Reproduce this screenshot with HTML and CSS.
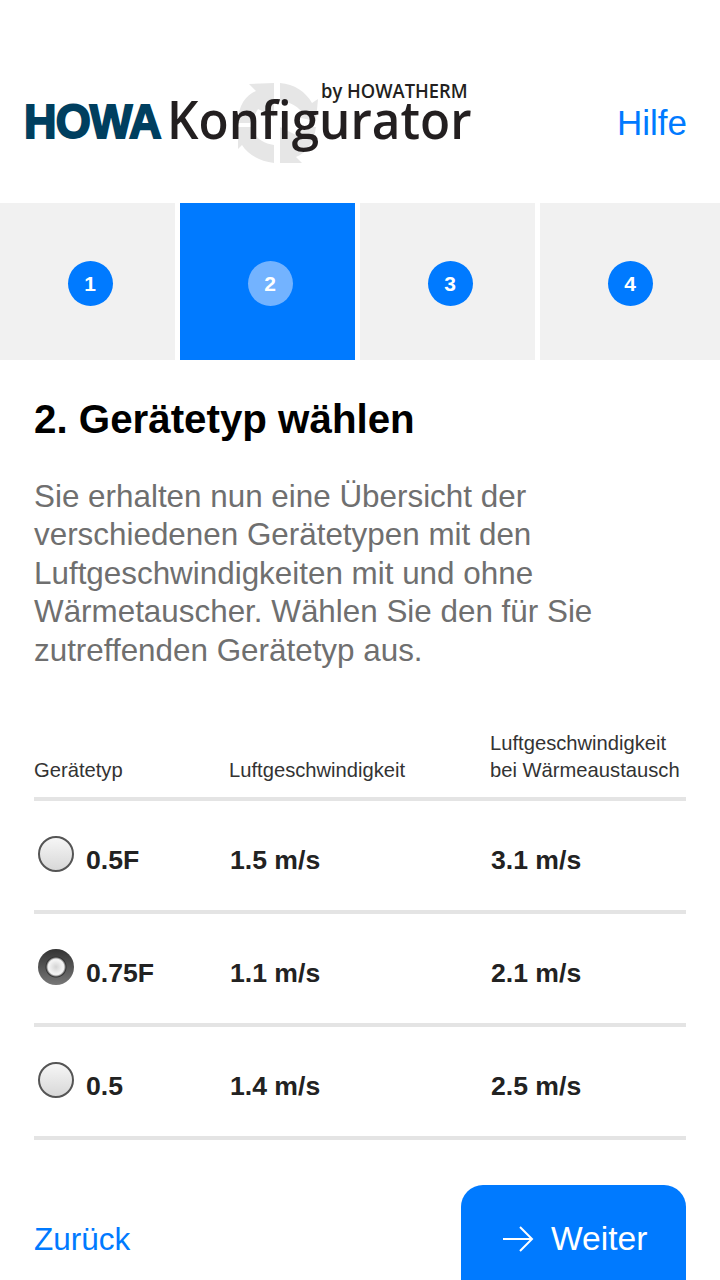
FILE: index.html
```html
<!DOCTYPE html>
<html lang="de">
<head>
	<meta charset="UTF-8">
	<title>HOWA Konfigurator</title>
	<link rel="stylesheet" href="styles.css">
</head>
<body>
	<div id="page">
		<div id="header">
			<div class="logo">
				<svg class="logo-arrows" width="84" height="84" viewBox="0 0 84 84">
					<path d="M38 2 V36 L22 28 L14 42 H2 C2 24 10 14 20 10 L13 3 Z" fill="#e6e6e6"/>
					<path d="M44 2 C58 3 70 11 76 22 L82 18 L80 40 L60 36 L66 31 C60 24 52 20 44 20 Z" fill="#e6e6e6"/>
					<path d="M2 46 H16 C18 56 26 62 38 64 V82 C24 80 12 74 6 64 L2 68 Z" fill="#e6e6e6"/>
					<path d="M44 46 L60 54 L68 46 H80 C78 62 70 72 60 76 L66 82 L44 82 Z" fill="#e6e6e6"/>
				</svg>
				<span class="logo-by">by HOWATHERM</span>
				<span class="logo-howa">HOWA</span>
				<span class="logo-name">Konfigurator</span>
			</div>
			<a class="help" href="#">Hilfe</a>
		</div>

		<div id="steps">
			<div class="step"><span class="num">1</span></div>
			<div class="step active"><span class="num">2</span></div>
			<div class="step"><span class="num">3</span></div>
			<div class="step last"><span class="num">4</span></div>
		</div>

		<div id="content">
			<h1>2. Gerätetyp wählen</h1>
			<p class="intro">Sie erhalten nun eine Übersicht der verschiedenen Gerätetypen mit den Luftgeschwindigkeiten mit und ohne Wärmetauscher. Wählen Sie den für Sie zutreffenden Gerätetyp aus.</p>

			<div class="row head">
				<div>Gerätetyp</div>
				<div>Luftgeschwindigkeit</div>
				<div>Luftgeschwindigkeit<br>bei Wärmeaustausch</div>
			</div>
			<div class="row item">
				<div class="type"><span class="radio"></span>0.5F</div>
				<div class="val">1.5 m/s</div>
				<div class="val">3.1 m/s</div>
			</div>
			<div class="row item">
				<div class="type"><span class="radio checked"></span>0.75F</div>
				<div class="val">1.1 m/s</div>
				<div class="val">2.1 m/s</div>
			</div>
			<div class="row item">
				<div class="type"><span class="radio"></span>0.5</div>
				<div class="val">1.4 m/s</div>
				<div class="val">2.5 m/s</div>
			</div>

			<div id="footer">
				<a class="back" href="#">Zurück</a>
				<a class="next" href="#">
					<svg width="32" height="26" viewBox="0 0 32 26" fill="none" stroke="#fff" stroke-width="2">
						<path d="M1 13 H30"/>
						<path d="M18 1 L30 13 L18 25"/>
					</svg>
					Weiter
				</a>
			</div>
		</div>
	</div>
</body>
</html>
```

FILE: styles.css
```css
*{
	margin: 0;
	padding: 0;
	box-sizing: border-box;
}
html,body{
	height: 100%;
	overflow: hidden;
	background: #fff;
}
body{
	font-family: "Liberation Sans", Arial, sans-serif;
}
a{
	text-decoration: none;
}
#page{
	width: 720px;
	height: 1280px;
	overflow: hidden;
}
#header{
	height: 203px;
	padding: 0 33px 0 24px;
	display: flex;
	justify-content: space-between;
	align-items: flex-start;
}
.logo{
	position: relative;
	width: 450px;
	height: 203px;
}
.logo-arrows{
	position: absolute;
	left: 212px;
	top: 81px;
}
.logo-by{
	position: absolute;
	left: 297px;
	top: 83px;
	font-family: "Open Sans", sans-serif;
	font-size: 19px;
	line-height: 16px;
	font-weight: 600;
	color: #231f20;
	white-space: nowrap;
	transform: scaleX(.965);
	transform-origin: left center;
}
.logo-howa{
	position: absolute;
	left: 0;
	top: 97px;
	font-size: 49px;
	line-height: 48px;
	font-weight: bold;
	color: #003f5f;
	-webkit-text-stroke: 2px #003f5f;
	letter-spacing: -1px;
	white-space: nowrap;
	transform: scaleX(.92);
	transform-origin: left center;
}
.logo-name{
	position: absolute;
	left: 143px;
	top: 99px;
	font-family: "Open Sans", sans-serif;
	font-size: 52px;
	line-height: 40px;
	font-weight: 600;
	color: #231f20;
	white-space: nowrap;
	transform: scaleX(.95);
	transform-origin: left center;
}
.help{
	margin-top: 103px;
	font-size: 35px;
	line-height: 40px;
	color: #007aff;
}
#steps{
	height: 157px;
	display: flex;
}
.step{
	width: 180px;
	padding-top: 4px;
	display: flex;
	align-items: center;
	justify-content: center;
	background: #f1f1f1;
	box-shadow: inset -5px 0 0 #fff;
}
.step.last{
	box-shadow: none;
}
.step.active{
	background: #007aff;
}
.num{
	width: 45px;
	height: 45px;
	border-radius: 50%;
	background: #007aff;
	color: #fff;
	font-size: 21px;
	font-weight: bold;
	display: flex;
	align-items: center;
	justify-content: center;
}
.step.active .num{
	background: #73b3ff;
}
#content{
	padding: 0 34px;
}
h1{
	margin-top: 37px;
	font-size: 40.3px;
	line-height: 46px;
	font-weight: bold;
	color: #000;
}
.intro{
	margin-top: 35px;
	font-size: 31.4px;
	line-height: 38.4px;
	color: #6f6f6f;
	width: 640px;
}
.row{
	display: grid;
	grid-template-columns: 195px 261px 1fr;
	width: 652px;
}
.head{
	margin-top: 58px;
	height: 73px;
	padding-bottom: 13px;
	align-items: end;
	font-size: 20.2px;
	line-height: 27px;
	color: #333;
	border-bottom: 4px solid #e4e4e4;
}
.item{
	height: 113px;
	padding-top: 9px;
	align-items: center;
	font-size: 26.6px;
	font-weight: bold;
	color: #222;
	border-bottom: 4px solid #e4e4e4;
}
.val{
	padding-left: 1px;
}
.type{
	display: flex;
	align-items: center;
	gap: 12px;
}
.radio{
	width: 36px;
	height: 36px;
	margin: -12px 0 0 4px;
	flex: none;
	border-radius: 50%;
	border: 2px solid #555;
	background: linear-gradient(#f6f6f6, #d8d8d8);
}
.radio.checked{
	border: none;
	background: radial-gradient(circle, #d4d4d4 0, #f4f4f4 7px, #ededed 8px, #333 10px, transparent 11px), linear-gradient(#333, #777);
}
#footer{
	margin-top: 45px;
	width: 652px;
	display: flex;
	justify-content: space-between;
	align-items: flex-start;
}
.back{
	margin-top: 34px;
	font-size: 31.5px;
	line-height: 40px;
	color: #007aff;
}
.next{
	width: 225px;
	height: 120px;
	padding: 35px 0 0 41px;
	border-radius: 22px 22px 0 0;
	background: #007aff;
	color: #fff;
	font-size: 33.6px;
	line-height: 38px;
	display: flex;
	align-items: flex-start;
	gap: 17px;
}
.next svg{
	margin-top: 6px;
}
```
